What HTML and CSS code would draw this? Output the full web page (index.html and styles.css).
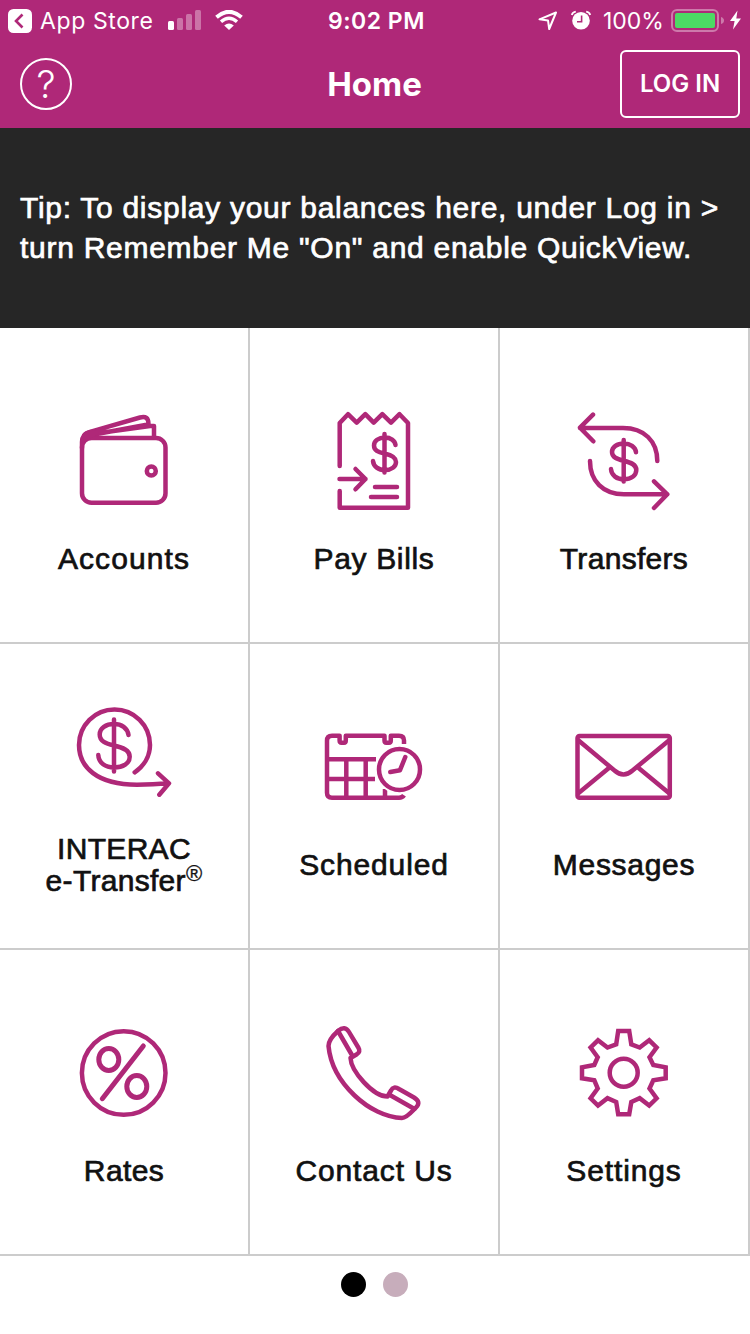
FILE: index.html
```html
<!DOCTYPE html>
<html lang="en">

<head>
    <meta charset="UTF-8">
    <meta name="viewport" content="width=device-width, initial-scale=1.0">
    <title>Home</title>
    <link rel="stylesheet" href="styles.css">
</head>

<body>
    <header class="header">
        <!-- status bar -->
        <div class="status">
            <div class="status-left">
                <svg class="back" width="24" height="24" viewBox="0 0 24 24">
                    <rect width="24" height="24" rx="5.5" fill="#fff"/>
                    <path d="M14.5 5.5L8 12l6.5 6.5" fill="none" stroke="#af2878" stroke-width="2.6"/>
                </svg>
                <span class="back-text">App Store</span>
                <svg class="signal" width="34" height="20" viewBox="0 0 34 20" fill="#fff">
                    <rect y="11" width="6" height="9" rx="1.5"/>
                    <g opacity=".35">
                        <rect x="9" y="8" width="6" height="12" rx="1.5"/>
                        <rect x="18" y="4" width="6" height="16" rx="1.5"/>
                        <rect x="27" y="0" width="6" height="20" rx="1.5"/>
                    </g>
                </svg>
                <svg class="wifi" width="28" height="20" viewBox="0 0 28 20">
                    <path d="M1.5 7.2Q14-3.6 26.5 7.2" fill="none" stroke="#fff" stroke-width="4"/>
                    <path d="M6 11.8Q14 4.8 22 11.8" fill="none" stroke="#fff" stroke-width="3.4"/>
                    <path d="M9.2 15.4Q14 11.4 18.8 15.4L14 20z" fill="#fff"/>
                </svg>
            </div>
            <span class="time">9:02 PM</span>
            <div class="status-right">
                <svg class="location" width="20" height="20" viewBox="0 0 20 20">
                    <path d="M1.5 9.3L18 2.5 11.2 19 10 10.4z" fill="none" stroke="#fff" stroke-width="2" stroke-linejoin="round"/>
                </svg>
                <svg class="alarm" width="20" height="20" viewBox="0 0 20 20">
                    <circle cx="10" cy="10.8" r="8.8" fill="#fff"/>
                    <path d="M.8 5Q1.6 2 4.8 1.6M15.2 1.6Q18.4 2 19.2 5" fill="none" stroke="#fff" stroke-width="1.8"/>
                    <path d="M10.6 5.5v6.2H6" fill="none" stroke="#af2878" stroke-width="1.6"/>
                </svg>
                <span class="percent">100%</span>
                <svg class="battery" width="53" height="24" viewBox="0 0 53 24">
                    <rect x="1" y="1" width="46" height="21" rx="5" fill="none" stroke="#cd7aab" stroke-width="2"/>
                    <path d="M50 8Q53 9 53 11.5T50 15z" fill="#cd7aab"/>
                    <rect x="4" y="4" width="40" height="15" rx="2" fill="#4cd964"/>
                </svg>
                <svg class="bolt" width="11" height="20" viewBox="0 0 11 20">
                    <path d="M7.5.5L0 11h4.6L3 19.5 11 8.4H6.3z" fill="#fff"/>
                </svg>
            </div>
        </div>
        <!-- nav bar -->
        <div class="nav">
            <a href="#" class="help">?</a>
            <h1 class="title">Home</h1>
            <a href="#" class="login">LOG IN</a>
        </div>
    </header>

    <div class="tip">
        <p class="tip-text">Tip: To display your balances here, under Log in &gt;<br>turn Remember Me "On" and enable QuickView.</p>
    </div>

    <main class="grid">
        <a href="#" class="tile">
            <svg class="icon" viewBox="-1 -6 130 120">
                <rect x="22" y="38" width="83.5" height="64.8" rx="9.5"/>
                <path d="M22 48V42Q22 34 30 31.8L80 17.5Q88.5 15 88.5 24M28 34.5L90 26H94V37M26 36L88 24.5"/>
                <path d="M24 37Q24 33 31 32L36 33 27 37.5z"/>
                <circle cx="91.3" cy="71" r="4.5"/>
            </svg>
            <span class="label w-accounts">Accounts</span>
        </a>
        <a href="#" class="tile">
            <svg class="icon" viewBox="-11 -6 130 120">
                <path d="M19.7 66V23L28 14.2 36.7 22.7 45.3 14.2 53.7 22.7 62.3 14.2 71 22.7 79.5 14.2 88 23V107.7H19.7V91"/>
                <path d="M19.5 79H45.5M35.5 69L45.5 79 35.5 89.3M55 87H77M51 97H77"/>
                <path d="M64.5 34V72.5M75.5 45C75 40.5 70.5 37.5 65 37.5C58.5 37.5 54 41 54 45.5C54 50.5 58 52 64.5 53.5C71.5 55 76 57 76 62C76 66.5 71.5 70 65 70C58.5 70 53.5 66.5 53 61"/>
            </svg>
            <span class="label w-bills">Pay Bills</span>
        </a>
        <a href="#" class="tile">
            <svg class="icon" viewBox="-1 -6 130 120">
                <path d="M33 14.7L20 27.7 33.3 41.3M20 28H63C84 28 97.3 41 97.3 61M30 61C30 81 43 94.3 64 94.3H107.3M94 81.3L107.3 94.3 94 108"/>
                <path d="M63.7 40V81.5M76 52.3C75.5 47 70 43.5 64 43.5C57 43.5 52 47 52 52C52 57.5 57 59 63.7 60.8C71 62.5 76.3 64.5 76.3 70C76.3 75.5 71 79.3 64 79.3C57 79.3 51.3 75.5 51 69"/>
            </svg>
            <span class="label w-transfers">Transfers</span>
        </a>
        <a href="#" class="tile">
            <svg class="icon" viewBox="-1 5 130 120">
                <path d="M74.7 77.3C84 71 90 61 90 50A35.5 35.5 0 0 0 19 50C19 72 37 89.7 77 89.7Q93 89.5 108.5 88.3M98 78.3L109 88.3 99.3 99.7"/>
                <path d="M54 24.5V76.5M68.5 40C67.5 33 61.5 29 54 29C46 29 39.7 33 39.7 39.5C39.7 46.5 46 48.5 54 50.5C63 52.5 69.7 55 69.7 61.7C69.7 68.5 63 72.5 54 72.5C45.5 72.5 38.7 68 38.3 60"/>
            </svg>
            <span class="label w-interac">INTERAC<br>e-Transfer<sup class="reg">®</sup></span>
        </a>
        <a href="#" class="tile">
            <svg class="icon square" viewBox="-1 -20 130 120">
                <path d="M94 24V20.5Q94 15.7 89 15.7H80.8V20.5Q80.8 22.7 79 22.7H76.3Q74.5 22.7 74.5 20.5V15.7H35.8V20.5Q35.8 22.7 34 22.7H31.5Q29.6 22.7 29.6 20.5V15.7H22Q17 15.7 17 20.7V72.7Q17 77.7 22 77.7H89Q92.5 77.7 94 75.3"/>
                <path d="M17 39.3H66M17 59H65M36.3 39V77M55.7 39V77M75 69V77"/>
                <circle class="knockout" cx="89.5" cy="49.5" r="24.5"/>
                <circle cx="89.5" cy="49.5" r="20.5"/>
                <path class="round" d="M95.3 37L90 50.2 80.3 52"/>
            </svg>
            <span class="label w-scheduled">Scheduled</span>
        </a>
        <a href="#" class="tile">
            <svg class="icon square" viewBox="-1 -20 130 120">
                <rect x="17.5" y="16" width="92.3" height="61.7" rx="2"/>
                <path d="M18 20L54.5 50.5Q63.5 58.5 72.5 50.5L109.5 20M18 73.5L49.5 47.5M109.5 73.5L78 47.5"/>
            </svg>
            <span class="label w-messages">Messages</span>
        </a>
        <a href="#" class="tile">
            <svg class="icon" viewBox="-1 -9 130 120">
                <circle cx="63.7" cy="58" r="41.8"/>
                <ellipse class="bold" cx="48.8" cy="44.5" rx="10" ry="11"/>
                <ellipse class="bold" cx="76.8" cy="71.5" rx="10" ry="11"/>
                <path class="bold" d="M83.3 31L42.3 83.7"/>
            </svg>
            <span class="label">Rates</span>
        </a>
        <a href="#" class="tile">
            <svg class="icon" viewBox="-1 -9 130 120">
                <path d="M28 16Q18.5 24.5 18.5 31C22 68 60 102 92 103Q96 103 104.5 94"/>
                <path d="M28 16Q35 10 39 17L48.3 32.5Q51 37 46.5 39.5L40.5 43C41 56 63 81.5 77.5 81.5L81 75.5Q83.5 70.5 89 74L104 82.5Q111.5 87 106 92.5L104.5 94L79 79.5M28 16L42.5 41"/>
            </svg>
            <span class="label w-contact">Contact Us</span>
        </a>
        <a href="#" class="tile">
            <svg class="icon gear" viewBox="-1 -9 130 120">
                <path d="M58.2 16H69.2L71.3 29.3 79.7 32.5 89.2 25.3 96.6 32.5 89.5 42.2 93.3 50 105.7 52.3V63.3L93.3 65.3 89.5 73.5 96.6 83.3 89.2 90.5 79.7 83.2 71.3 87 69.2 99.3H58.2L56.2 87 47.5 83.2 38 90.5 30.6 83.3 37.7 73.5 34.3 65.3 22 63.3V52.3L34.3 50 37.7 42.2 30.6 32.5 38 25.3 47.5 32.5 56.2 29.3z"/>
                <circle cx="63.7" cy="57.7" r="14"/>
            </svg>
            <span class="label w-settings">Settings</span>
        </a>
    </main>

    <div class="dots">
        <span class="dot active"></span>
        <span class="dot"></span>
    </div>
</body>

</html>
```

FILE: styles.css
```css
* {
    box-sizing: border-box;
    margin: 0;
    padding: 0;
}
body {
    width: 750px;
    height: 1334px;
    overflow: hidden;
    background-color: #fff;
    font-family: "Liberation Sans", Arial, sans-serif;
}
a {
    color: inherit;
    text-decoration: none;
}
svg {
    display: block;
    flex-shrink: 0;
}

/* header */
.header {
    height: 128px;
    background-color: #af2878;
    color: #fff;
}
.status {
    height: 40px;
    padding: 0 9px 0 8px;
    display: grid;
    grid-template-columns: 320px auto 1fr;
    align-items: center;
    font-family: Inter, sans-serif;
    font-size: 23px;
    white-space: nowrap;
}
.status-left,
.status-right {
    display: flex;
    align-items: center;
}
.status-right {
    justify-content: flex-end;
}
.back {
    margin-top: 2px;
}
.back-text {
    width: 113px;
    margin: 2px 15px 0 8px;
    letter-spacing: 0.6px;
}
.signal {
    margin-right: 13px;
}
.time {
    margin-top: 2px;
    font-weight: 600;
    letter-spacing: 0.5px;
}
.location {
    margin-right: 13px;
}
.alarm {
    margin-right: 12px;
}
.percent {
    width: 62px;
    margin: 2px 6px 0 0;
}
.battery {
    margin: 2px 6px 0 0;
}
.nav {
    height: 88px;
    padding: 0 10px 0 20px;
    display: grid;
    grid-template-columns: 120px 1fr 120px;
    align-items: center;
}
.help {
    width: 52px;
    height: 52px;
    border: 2px solid #fff;
    border-radius: 50%;
    font-family: Inter, sans-serif;
    font-size: 38px;
    font-weight: 300;
    line-height: 49px;
    text-align: center;
}
.title {
    padding-right: 11px;
    font-family: Inter, sans-serif;
    font-size: 33px;
    font-weight: 700;
    letter-spacing: 0;
    text-align: center;
}
.login {
    height: 68px;
    border: 2px solid #fff;
    border-radius: 6px;
    font-family: Inter, sans-serif;
    font-size: 24px;
    font-weight: 600;
    line-height: 64px;
    text-align: center;
}

/* tip */
.tip {
    height: 200px;
    padding: 60px 20px;
    background-color: #262626;
    color: #fff;
}
.tip-text {
    font-size: 30px;
    line-height: 40px;
    letter-spacing: 0.72px;
    white-space: nowrap;
    -webkit-text-stroke: 0.7px #fff;
}

/* tiles */
.grid {
    display: grid;
    grid-template-columns: repeat(3, 250px);
    grid-template-rows: 316px 306px 306px;
}
.tile {
    display: flex;
    flex-direction: column;
    align-items: center;
    justify-content: flex-end;
    gap: 13px;
    padding-bottom: 51px;
    border-right: 2px solid #ccc;
    border-bottom: 2px solid #ccc;
    color: #111;
}
.icon {
    width: 130px;
    height: 120px;
    fill: none;
    stroke: #af2878;
    stroke-width: 4.5;
    stroke-linecap: round;
    stroke-linejoin: round;
}
.square {
    stroke-linecap: butt;
}
.gear {
    stroke-linejoin: miter;
}
.bold {
    stroke-width: 5;
}
.knockout {
    fill: #fff;
    stroke: none;
}
.round {
    stroke-linecap: round;
}
.label {
    height: 64px;
    display: flex;
    flex-direction: column;
    justify-content: center;
    font-size: 30px;
    line-height: 32px;
    letter-spacing: 0.4px;
    text-align: center;
    white-space: nowrap;
    -webkit-text-stroke: 0.7px #111;
}
.w-accounts {
    letter-spacing: 1.1px;
}
.w-bills {
    letter-spacing: 0.65px;
}
.w-transfers {
    letter-spacing: 0.3px;
}
.w-interac {
    display: block;
    letter-spacing: 0.3px;
}
.w-scheduled,
.w-contact,
.w-settings {
    letter-spacing: 0.88px;
}
.w-messages {
    letter-spacing: 0.7px;
}
.reg {
    font-size: 22px;
    line-height: 0;
    vertical-align: 10px;
    -webkit-text-stroke: 0.3px #111;
}

/* page dots */
.dots {
    display: flex;
    justify-content: center;
    gap: 17px;
    padding: 16px 1px 0 0;
}
.dot {
    width: 25px;
    height: 25px;
    border-radius: 50%;
    background-color: #c7adbb;
}
.dot.active {
    background-color: #000;
}
```
